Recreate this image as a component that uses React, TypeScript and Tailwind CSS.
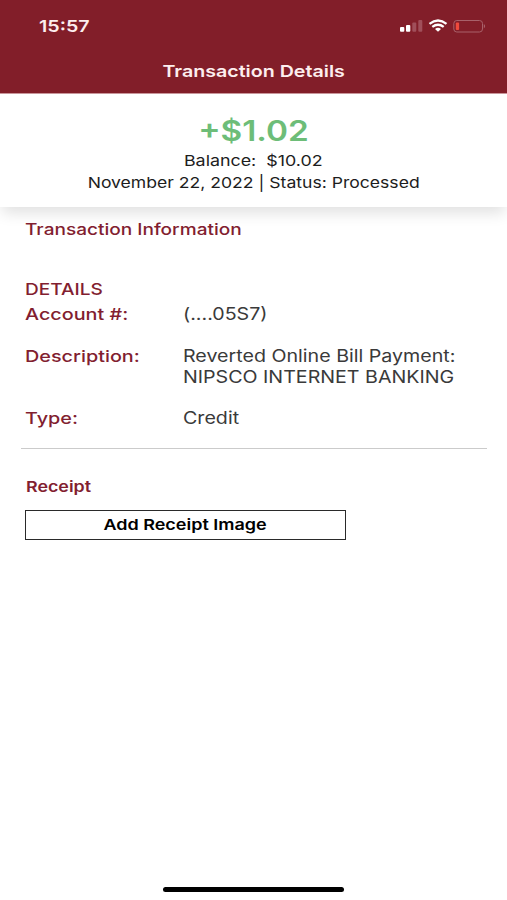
import type { ReactNode } from 'react'
import clsx from 'clsx'

const DETAILS = [
  { label: 'Account #:', lines: ['(....05S7)'] },
  { label: 'Description:', lines: ['Reverted Online Bill Payment:', 'NIPSCO INTERNET BANKING'] },
  { label: 'Type:', lines: ['Credit'] },
]

// Text in the widened face used across the whole app
function Wide({ children, className }: { children: ReactNode; className?: string }) {
  return <span className={clsx('block w-max whitespace-pre', className)}>{children}</span>
}

function StatusBar() {
  return (
    <div className="flex h-[52px] items-center justify-between pl-[39px] pr-[20px]">
      <Wide className="origin-left scale-x-[1.19] text-[16.5px] leading-5 font-semibold">15:57</Wide>
      <svg width="88" height="16" viewBox="0 0 88 16" fill="none">
        <rect x="1" y="9" width="4.300" height="4.800" rx="1" fill="#fff" />
        <rect x="7" y="7" width="4.300" height="6.800" rx="1" fill="#fff" />
        <rect x="13.300" y="4.500" width="4" height="9.300" rx="1" fill="#a04f5a" />
        <rect x="19.300" y="2" width="4" height="11.800" rx="1" fill="#a04f5a" />
        <path d="M30.500 5.900Q39 -0.800 47.500 5.900" stroke="#fff" strokeWidth="2.300" />
        <path d="M33.300 8.900Q39 4.500 44.700 8.900" stroke="#fff" strokeWidth="2.300" />
        <path d="M36 11Q39 8.500 42 11L39 13.800Z" fill="#fff" />
        <rect x="54.800" y="2.500" width="28.700" height="11.500" rx="3" stroke="#a8616a" />
        <rect x="56.800" y="4.500" width="3.300" height="7.500" rx="1" fill="#ee4a3c" />
        <path d="M84.800 6Q87.500 8.200 84.800 10.400Z" fill="#a8616a" />
      </svg>
    </div>
  )
}

export default function App() {
  return (
    <div className="flex h-[900px] w-[507px] flex-col overflow-hidden bg-white font-['Inter',sans-serif]">
      <header className="relative z-10 h-[93px] shrink-0 bg-[#821e29] text-[#fdeeee]">
        <StatusBar />
        <h1 className="flex justify-center pt-[9px]">
          <Wide className="scale-x-[1.19] text-[16.5px] leading-5 font-semibold">Transaction Details</Wide>
        </h1>
      </header>

      <section className="flex h-[114px] shrink-0 flex-col items-center border-t border-[#c9969b] bg-white pt-[21px] text-[#1d1d1d] shadow-[0_8px_14px_-2px_rgba(0,0,0,0.12)]">
        <Wide className="scale-x-[1.19] text-[28px] leading-8 font-semibold text-[#6dbd78]">+$1.02</Wide>
        <Wide className="mt-[3px] scale-x-[1.19] text-[15px] leading-[22px]">{'Balance:  $10.02'}</Wide>
        <Wide className="scale-x-[1.172] text-[15px] leading-[22px]">November 22, 2022 | Status: Processed</Wide>
      </section>

      <main className="flex grow flex-col pt-[12px] text-[#821e30]">
        <h2 className="pl-[25px]">
          <Wide className="origin-left scale-x-[1.19] text-[16px] leading-5 font-medium">Transaction Information</Wide>
        </h2>
        <h3 className="mt-[40px] pl-[25px]">
          <Wide className="origin-left scale-x-[1.19] text-[16px] leading-5 font-medium">DETAILS</Wide>
        </h3>
        <dl className="mt-[5px] flex flex-col gap-[21px] pl-[25px]">
          {DETAILS.map((row) => (
            <div key={row.label} className="flex">
              <dt className="w-[158px] shrink-0">
                <Wide className="origin-left scale-x-[1.2] text-[16.5px] leading-[21px] font-medium">{row.label}</Wide>
              </dt>
              <dd className="text-[#3a3a3a]">
                {row.lines.map((line) => (
                  <Wide key={line} className="origin-left scale-x-[1.155] text-[17px] leading-[20.5px]">
                    {line}
                  </Wide>
                ))}
              </dd>
            </div>
          ))}
        </dl>
        <hr className="mt-[19px] mr-[20px] ml-[21px] border-[#cbcbcb]" />
        <h3 className="mt-[28px] pl-[25.500px]">
          <Wide className="origin-left scale-x-[1.19] text-[15px] leading-5 font-semibold">Receipt</Wide>
        </h3>
        <button className="mt-[13px] ml-[25px] flex h-[30px] w-[321px] items-center justify-center border border-[#2a2a2a] text-black">
          <Wide className="scale-x-[1.2] text-[15px] leading-5 font-semibold">Add Receipt Image</Wide>
        </button>
      </main>

      <div className="mb-[8px] ml-[163px] h-[5px] w-[181px] shrink-0 rounded-full bg-black" />
    </div>
  )
}
